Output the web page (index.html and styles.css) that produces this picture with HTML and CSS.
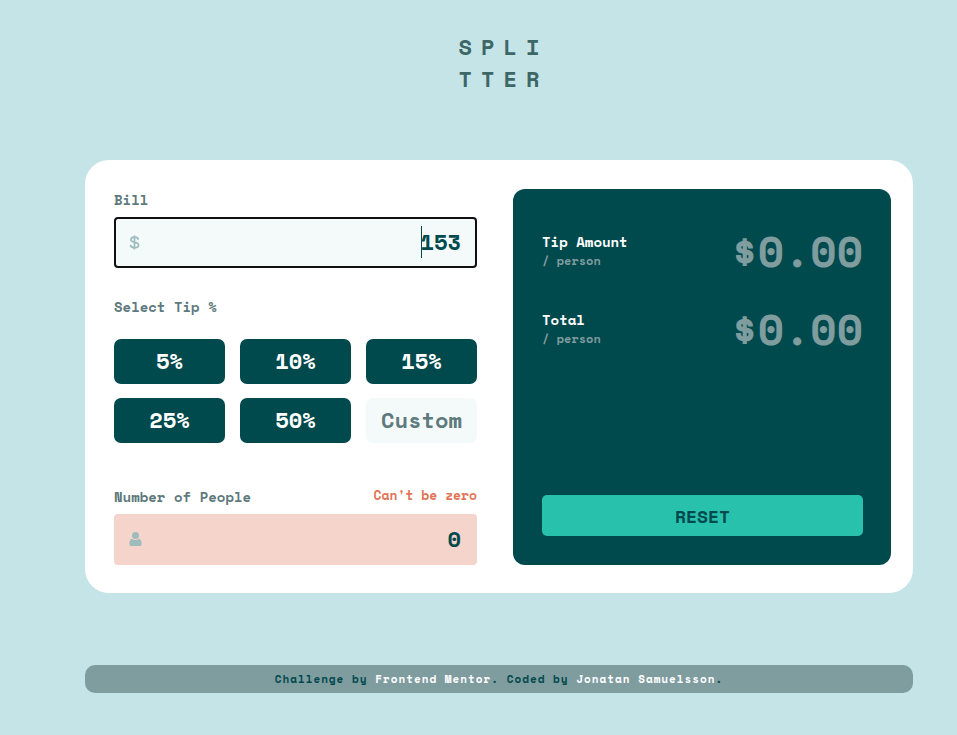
FILE: index.html
```html
<!DOCTYPE html>
<html lang="en">
<head>
  <meta charset="utf-8">
  <meta name="viewport" content="width=device-width, initial-scale=1">
  <title>Splitter</title>
  <link rel="stylesheet" href="styles.css">
</head>
<body>
  <header>
    <h1 class="logo">SPLI<br>TTER</h1>
  </header>

  <main class="card">
    <form class="form">
      <div class="label-row">
        <label for="bill">Bill</label>
      </div>
      <div class="field">
        <svg class="icon" viewBox="0 0 13 17" aria-hidden="true">
          <path class="icon-line" d="M5.500 1.500v14M9.300 5.600C9.200 4 7.800 3.200 5.600 3.200S1.900 4.100 1.900 5.700c0 3.600 7.700 1.400 7.700 5.300 0 1.700-1.600 2.700-3.900 2.700S1.600 12.700 1.500 10.900"/>
        </svg>
        <input class="amount-input is-active" id="bill" type="text" inputmode="decimal" value="153">
        <span class="caret"></span>
      </div>

      <fieldset class="tips">
        <legend>Select Tip %</legend>
        <div class="tip-grid">
          <button class="tip" type="button">5%</button>
          <button class="tip" type="button">10%</button>
          <button class="tip" type="button">15%</button>
          <button class="tip" type="button">25%</button>
          <button class="tip" type="button">50%</button>
          <input class="custom" type="text" inputmode="decimal" placeholder="Custom" aria-label="Custom">
        </div>
      </fieldset>

      <div class="label-row">
        <label for="people">Number of People</label>
        <span class="error" id="people-error">Can't be zero</span>
      </div>
      <div class="field">
        <svg class="icon" viewBox="0 0 13 17" aria-hidden="true">
          <circle class="icon-fill" cx="6.500" cy="4.400" r="3.500"/>
          <path class="icon-fill" d="M3 7.700C1.100 8.300.4 10.200.4 12.700c0 1.500.8 2.300 2.200 2.300h7.800c1.400 0 2.200-.8 2.200-2.300 0-2.500-.7-4.400-2.600-5-2 1.600-5 1.600-7 0z"/>
        </svg>
        <input class="amount-input is-invalid" id="people" type="text" inputmode="numeric" value="0" aria-describedby="people-error">
      </div>
    </form>

    <section class="result">
      <div class="result-row">
        <div>
          <h2>Tip Amount</h2>
          <p class="unit">/ person</p>
        </div>
        <output class="total">$0.00</output>
      </div>
      <div class="result-row">
        <div>
          <h2>Total</h2>
          <p class="unit">/ person</p>
        </div>
        <output class="total">$0.00</output>
      </div>
      <button class="reset" type="button">RESET</button>
    </section>
  </main>

  <footer>
    Challenge by <a href="#">Frontend Mentor</a>. Coded by <a href="#">Jonatan Samuelsson</a>.
  </footer>
</body>
</html>
```
FILE: styles.css
```css
* {
  box-sizing: border-box;
  margin: 0;
}

body,
button,
input {
  font-family: "Space Mono", "Liberation Mono", monospace;
  font-weight: 700;
}

body {
  min-height: 100vh;
  padding: 31px 44px 32px 85px;
  background: #c5e4e7;
  color: #00494d;
  font-size: 14px;
  line-height: 22px;
}

.logo {
  margin-bottom: 65px;
  padding-left: 9px;
  color: #3d6666;
  font-size: 22px;
  line-height: 32px;
  letter-spacing: 9px;
  text-align: center;
}

.card {
  display: grid;
  grid-template-columns: 363fr 378fr;
  gap: 36px;
  padding: 29px 22px 28px 29px;
  border-radius: 24px;
  background: #fff;
}

.label-row {
  display: flex;
  justify-content: space-between;
  margin-bottom: 6px;
}

label,
legend {
  padding: 0;
  color: #5e7a7d;
}

.error {
  color: #e17457;
  font-size: 13px;
  line-height: 18px;
}

.field {
  position: relative;
}

.icon {
  position: absolute;
  top: 17px;
  left: 15px;
  width: 13px;
  height: 17px;
}

.icon-line {
  fill: none;
  stroke: #9ebbbd;
  stroke-width: 1.700;
}

.icon-fill {
  fill: #9ebbbd;
}

.amount-input {
  display: block;
  width: 100%;
  height: 51px;
  padding: 0 14px 2px 36px;
  border: 2px solid transparent;
  border-radius: 4px;
  outline: none;
  background: #f4fafa;
  color: #00494d;
  font-size: 22px;
  text-align: right;
}

.is-active {
  border-color: #101010;
}

.is-invalid {
  border-color: #f5d4cb;
  background: #f5d4cb;
}

.caret {
  position: absolute;
  top: 9px;
  right: 55px;
  width: 1px;
  height: 32px;
  background: #00494d;
}

.tips {
  margin: 28px 0 43px;
  padding: 0;
  border: 0;
}

.tip-grid {
  display: grid;
  grid-template-columns: repeat(3, 1fr);
  gap: 14px 15px;
  margin-top: 21px;
}

.tip,
.custom {
  width: 100%;
  min-width: 0;
  height: 45px;
  padding: 0 0 2px;
  border: 0;
  border-radius: 7px;
  font-size: 22px;
  text-align: center;
}

.tip {
  background: #00494d;
  color: #fff;
}

.custom {
  background: #f4fafa;
  color: #00494d;
}

.custom::placeholder {
  color: #5e7a7d;
  opacity: 1;
}

.result {
  display: flex;
  flex-direction: column;
  gap: 26px;
  padding: 36px 28px 29px 29px;
  border-radius: 12px;
  background: #00494d;
}

.result-row {
  display: flex;
  align-items: center;
  justify-content: space-between;
  height: 52px;
}

h2 {
  color: #fff;
  font-size: 14px;
  line-height: 20px;
}

.unit {
  color: #7f9c9f;
  font-size: 12px;
  line-height: 18px;
}

.total {
  color: #7f9c9f;
  font-size: 43px;
  line-height: 52px;
}

.reset {
  height: 41px;
  margin-top: auto;
  padding: 0;
  border: 0;
  border-radius: 5px;
  background: #28c1ac;
  color: #00494d;
  font-size: 18px;
}

footer {
  margin-top: 72px;
  padding: 3px 8px;
  border-radius: 10px;
  background: #7f9c9f;
  font-size: 11px;
  letter-spacing: 1px;
  text-align: center;
}

footer a {
  color: #fff;
  text-decoration: none;
}
```
